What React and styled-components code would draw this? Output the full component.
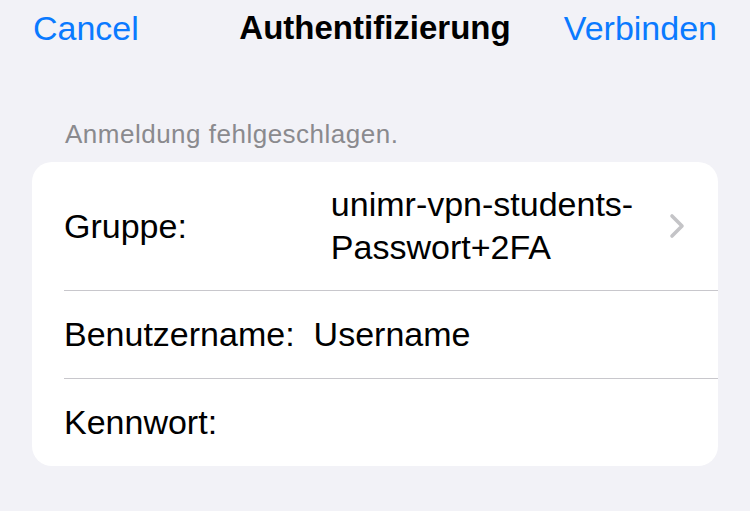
import styled, { createGlobalStyle } from "styled-components";

const GlobalStyle = createGlobalStyle`
  html, body {
    margin: 0;
    padding: 0;
    background: #f2f2f7;
  }
  body {
    font-family: "Liberation Sans", Arial, sans-serif;
    -webkit-font-smoothing: antialiased;
  }
`;

const Screen = styled.div`
  width: 750px;
  height: 511px;
  background: #f2f2f7;
  overflow: hidden;
`;

const NavBar = styled.div`
  height: 56px;
  padding: 0 33px;
  display: grid;
  grid-template-columns: 1fr auto 1fr;
  align-items: center;
  font-size: 34px;
`;

const NavButton = styled.span`
  color: #0a7aff;
  justify-self: ${(props) => (props.$right ? "end" : "start")};
`;

const Title = styled.span`
  font-weight: 700;
  font-size: 33px;
  color: #000;
`;

const SectionHeader = styled.div`
  margin-top: 62px;
  padding-left: 65px;
  height: 32px;
  line-height: 32px;
  margin-bottom: 12px;
  font-size: 26px;
  letter-spacing: 0.5px;
  color: #8a8a8e;
`;

const Card = styled.div`
  margin: 0 32px;
  background: #fff;
  border-radius: 20px;
  overflow: hidden;
`;

const Row = styled.div`
  margin-left: 32px;
  padding-right: 33px;
  height: ${(props) => props.$height}px;
  display: flex;
  align-items: center;
  font-size: 34px;
  color: #000;
  border-bottom: ${(props) => (props.$last ? "none" : "1px solid #c8c7cc")};
  box-sizing: border-box;
`;

const Label = styled.span`
  flex: none;
`;

const Value = styled.span`
  flex: 1;
  margin-left: ${(props) => props.$indent}px;
  line-height: 43px;
  white-space: pre-line;
`;

const Chevron = styled.svg`
  flex: none;
  width: 16px;
  height: 26px;
  margin-left: 12px;
`;

export default function App() {
  return (
    <Screen>
      <GlobalStyle />
      <NavBar>
        <NavButton>Cancel</NavButton>
        <Title>Authentifizierung</Title>
        <NavButton $right>Verbinden</NavButton>
      </NavBar>
      <SectionHeader>Anmeldung fehlgeschlagen.</SectionHeader>
      <Card>
        <Row $height={129}>
          <Label>Gruppe:</Label>
          <Value $indent={144}>{"unimr-vpn-students-\nPasswort+2FA"}</Value>
          <Chevron viewBox="0 0 16 26">
            <path
              d="M3 3 L13 13 L3 23"
              fill="none"
              stroke="#c4c4c7"
              strokeWidth="3.6"
              strokeLinecap="round"
              strokeLinejoin="round"
            />
          </Chevron>
        </Row>
        <Row $height={88}>
          <Label>Benutzername:</Label>
          <Value $indent={19}>Username</Value>
        </Row>
        <Row $height={87} $last>
          <Label>Kennwort:</Label>
        </Row>
      </Card>
    </Screen>
  );
}
